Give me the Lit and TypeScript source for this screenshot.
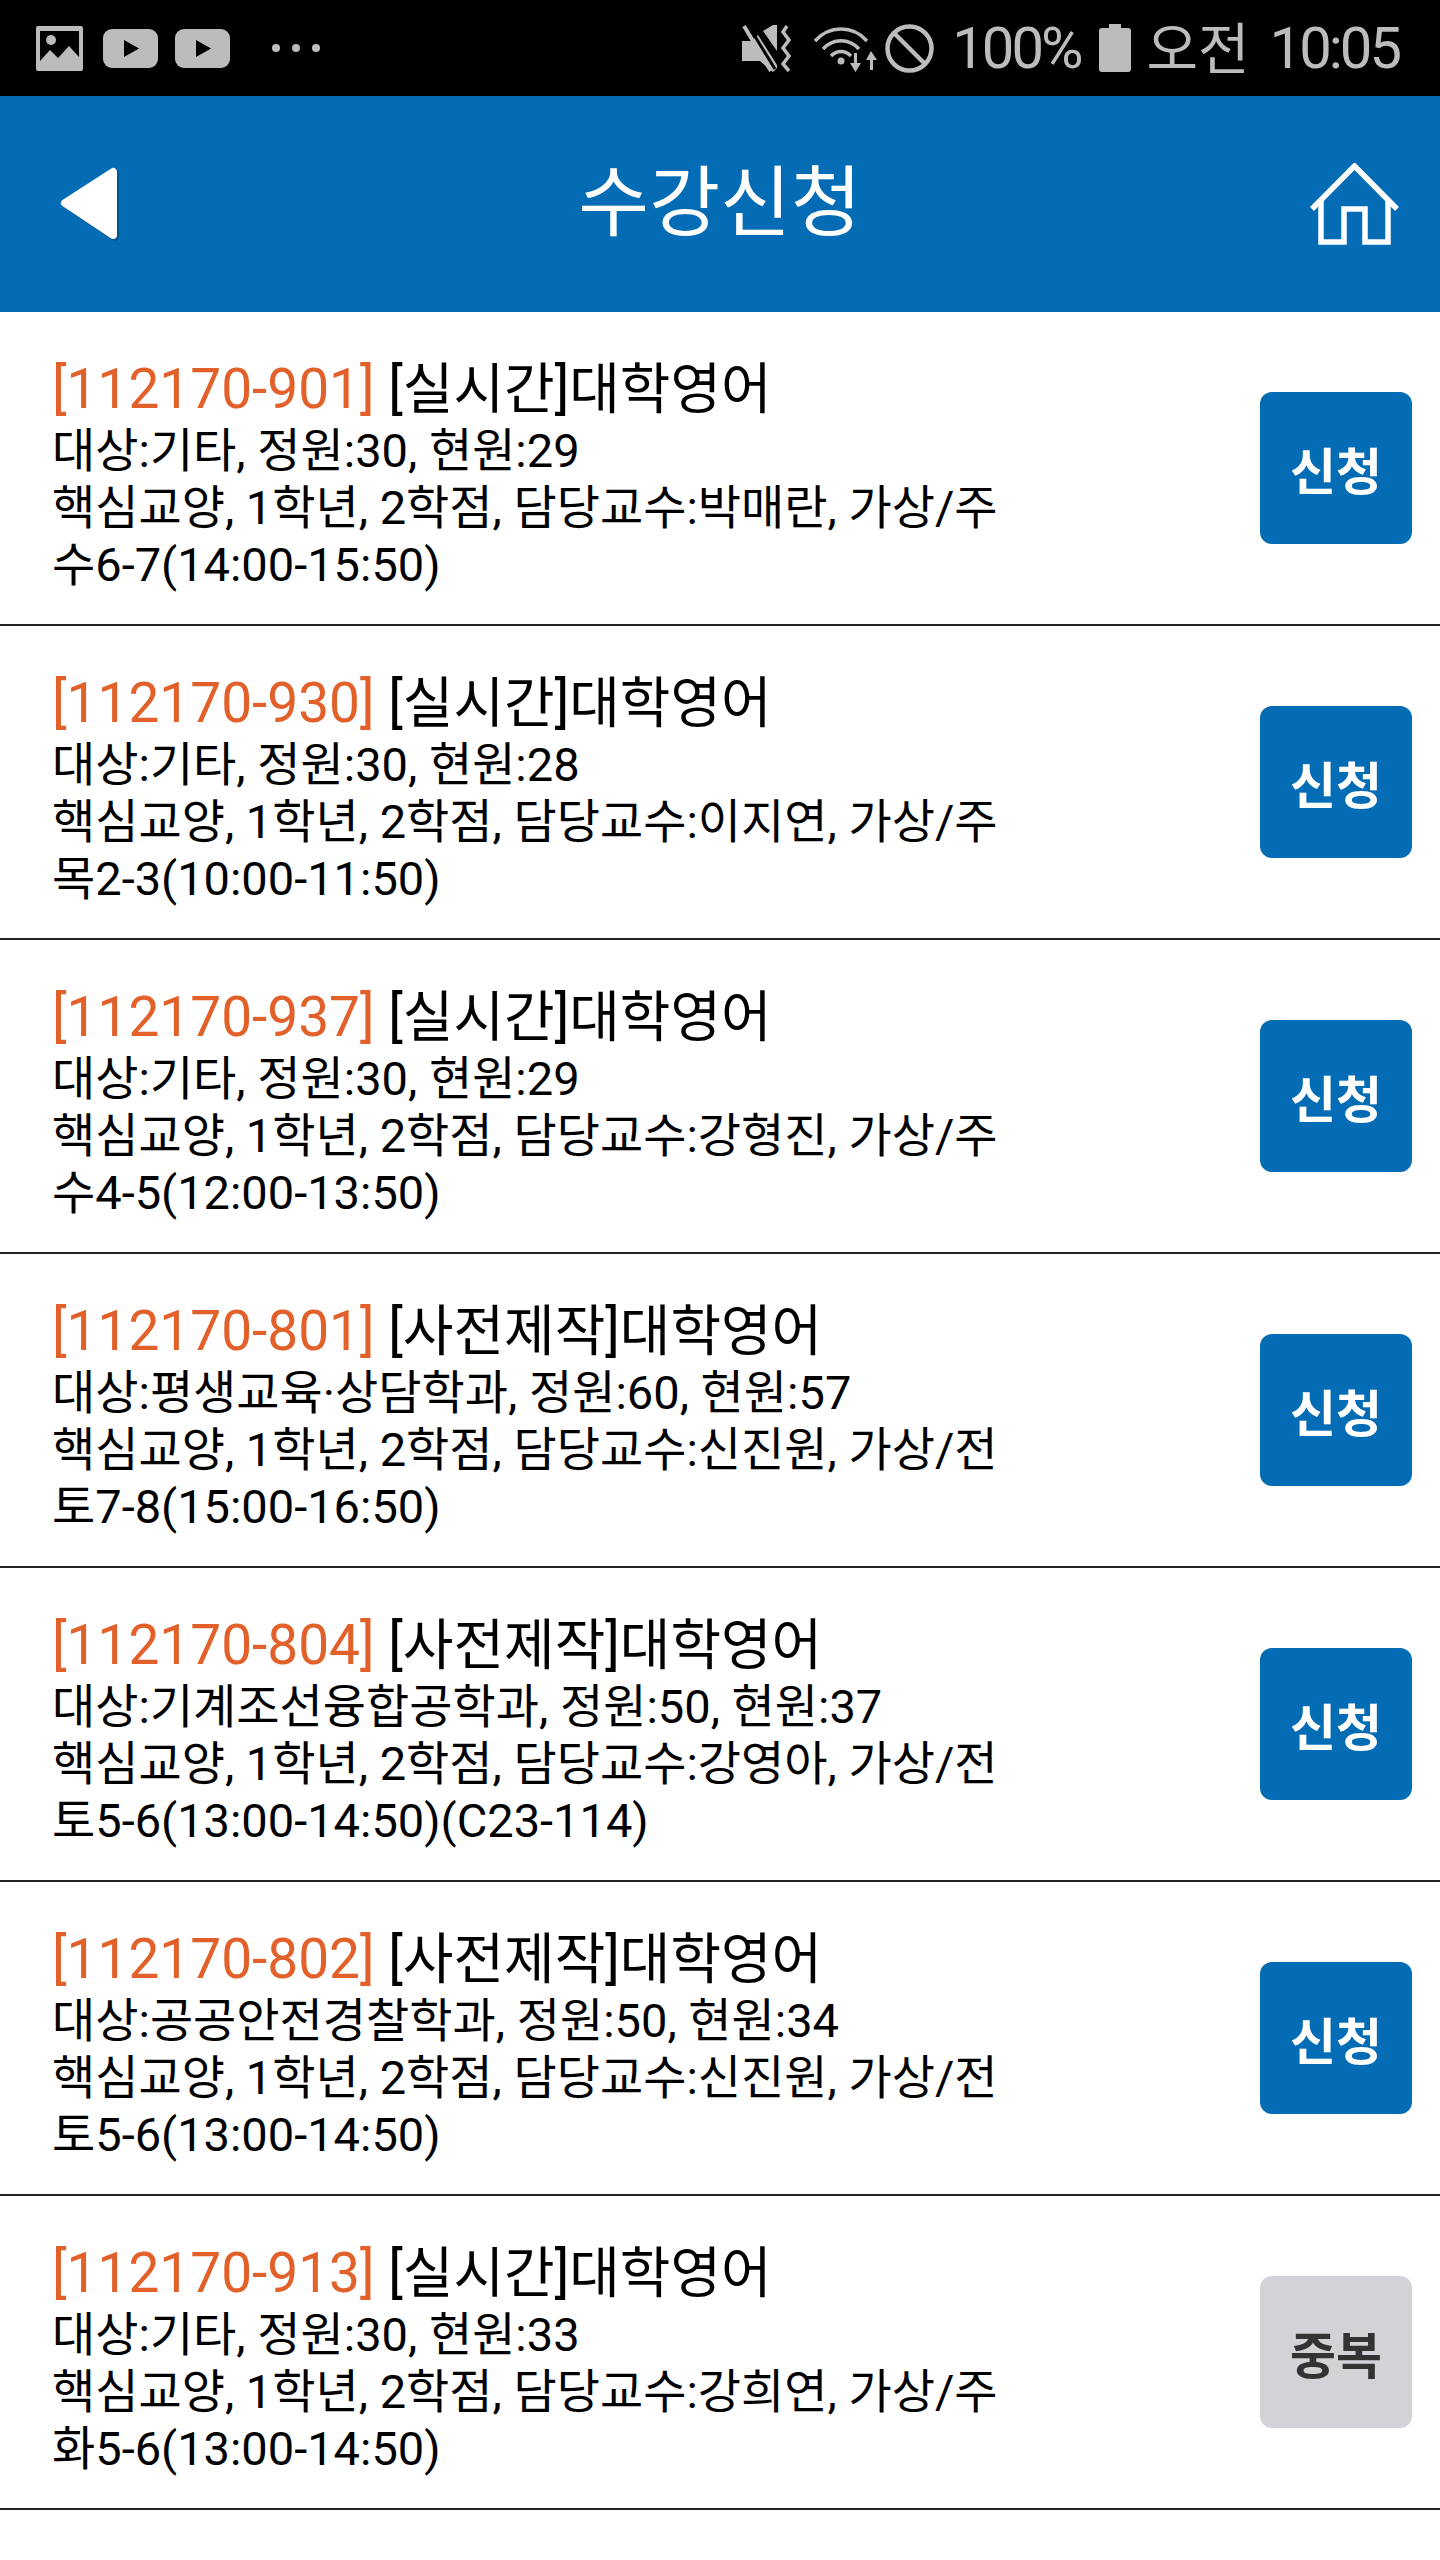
import { LitElement, html, css, svg } from "lit";
import { customElement } from "lit/decorators.js";

const COURSES = [
  { code: "112170-901", kind: "실시간", target: "기타", cap: 30, cur: 29, prof: "박매란", slot: "가상/주수6-7(14:00-15:50)", dup: false },
  { code: "112170-930", kind: "실시간", target: "기타", cap: 30, cur: 28, prof: "이지연", slot: "가상/주목2-3(10:00-11:50)", dup: false },
  { code: "112170-937", kind: "실시간", target: "기타", cap: 30, cur: 29, prof: "강형진", slot: "가상/주수4-5(12:00-13:50)", dup: false },
  { code: "112170-801", kind: "사전제작", target: "평생교육·상담학과", cap: 60, cur: 57, prof: "신진원", slot: "가상/전토7-8(15:00-16:50)", dup: false },
  { code: "112170-804", kind: "사전제작", target: "기계조선융합공학과", cap: 50, cur: 37, prof: "강영아", slot: "가상/전토5-6(13:00-14:50)(C23-114)", dup: false },
  { code: "112170-802", kind: "사전제작", target: "공공안전경찰학과", cap: 50, cur: 34, prof: "신진원", slot: "가상/전토5-6(13:00-14:50)", dup: false },
  { code: "112170-913", kind: "실시간", target: "기타", cap: 30, cur: 33, prof: "강희연", slot: "가상/주화5-6(13:00-14:50)", dup: true },
];

const playIcon = svg`<svg class="play" viewBox="0 0 55 39"><rect width="55" height="39" rx="9" fill="#bdbbbd"/><path d="M21 11 L36 19.5 L21 28 Z" fill="#000"/></svg>`;

@customElement("app-root")
export class AppRoot extends LitElement {
  static styles = css`
    :host {
      display: block;
      width: 1440px;
      height: 2560px;
      overflow: hidden;
      background: #fff;
      font-family: Roboto, "Noto Sans CJK KR", sans-serif;
    }

    /* status bar */
    .status {
      height: 96px;
      background: #000;
      color: #bdbbbd;
      display: flex;
      align-items: center;
      padding: 0 41px 0 36px;
      box-sizing: border-box;
    }
    .status svg { display: block; flex: none; }
    .status .pic { width: 47px; height: 45px; margin-right: 20px; }
    .status .play { width: 55px; height: 39px; margin-right: 17px; }
    .status .dots { width: 50px; height: 10px; margin-left: 24px; }
    .status .right {
      margin-left: auto;
      display: flex;
      align-items: center;
    }
    .status .mute { width: 51px; height: 47px; margin-right: 20px; }
    .status .wifi { width: 65px; height: 47px; margin-right: 7px; }
    .status .block { width: 49px; height: 49px; margin-right: 18px; }
    .status .batt { width: 32px; height: 48px; margin: 0 16px 0 18px; }
    .status .txt {
      font-size: 58px;
      line-height: 60px;
      letter-spacing: -3px;
    }
    .status .ampm {
      font-size: 56px;
      line-height: 60px;
      margin: 4px 20px 0 0;
    }

    /* header */
    .head {
      height: 216px;
      background: #046bb5;
      display: grid;
      grid-template-columns: 1fr auto 1fr;
      align-items: center;
      color: #fff;
    }
    .head h1 {
      margin: 0;
      font-size: 77px;
      font-weight: 400;
      line-height: 90px;
    }
    .head .back { width: 58px; height: 74px; margin-left: 60px; display: block; overflow: visible; }
    .head .home { width: 89px; height: 82px; margin-right: 41px; justify-self: end; display: block; }

    /* list */
    .row {
      height: 314px;
      box-sizing: border-box;
      border-bottom: 2px solid #222;
      padding: 0 28px 0 52px;
      display: flex;
      align-items: center;
      justify-content: space-between;
    }
    .info {
      width: 960px;
      align-self: flex-start;
      padding-top: 45px;
      word-break: break-all;
      color: #000;
      font-size: 47px;
      line-height: 57px;
    }
    .title {
      font-size: 55px;
      line-height: 65px;
    }
    .code { color: #e2602a; }
    .apply {
      width: 152px;
      height: 152px;
      flex: none;
      border: none;
      border-radius: 12px;
      background: #046bb5;
      color: #fff;
      font: 700 50px Roboto, "Noto Sans CJK KR", sans-serif;
      padding: 0;
    }
    .apply.dup {
      background: #d3d2d6;
      color: #333;
    }
  `;

  renderStatus() {
    return html`
      <div class="status">
        <svg class="pic" viewBox="0 0 47 45">
          <path fill-rule="evenodd" fill="#bdbbbd" d="M2 0H45a2 2 0 0 1 2 2V43a2 2 0 0 1-2 2H2a2 2 0 0 1-2-2V2a2 2 0 0 1 2-2ZM4 5V35L14 24L22 32L33 20L43 31V5Z"/>
          <circle cx="15" cy="14" r="5" fill="#bdbbbd"/>
        </svg>
        ${playIcon}${playIcon}
        <svg class="dots" viewBox="0 0 50 10">
          <circle cx="5" cy="5" r="4" fill="#bdbbbd"/><circle cx="25" cy="5" r="4" fill="#bdbbbd"/><circle cx="45" cy="5" r="4" fill="#bdbbbd"/>
        </svg>
        <div class="right">
          <svg class="mute" viewBox="0 0 51 47">
            <path fill="#bdbbbd" d="M0 16H9L16 10L35 40V43L31 47L18 36H0ZM21 6L31 0H35V26Z"/>
            <path stroke="#bdbbbd" stroke-width="4" fill="none" d="M2 1L29 46"/>
            <path stroke="#000" stroke-width="3" fill="none" d="M6 0L33 44"/>
            <path stroke="#bdbbbd" stroke-width="3.5" fill="none" d="M45 1L41 7L47 15L41 23L47 31L41 39L47 46"/>
          </svg>
          <svg class="wifi" viewBox="0 0 65 47">
            <g fill="none" stroke="#bdbbbd" stroke-width="3.5">
              <path d="M2 16C16 0 40 0 54 16"/>
              <path d="M10 24C20 13 36 13 46 24"/>
              <path d="M18 31C24 25 32 25 38 31"/>
            </g>
            <circle cx="28" cy="36" r="3.5" fill="#bdbbbd"/>
            <path fill="#bdbbbd" d="M41 28H44V38H48L42.5 47L37 38H41ZM58 26L64 35H60V45H57V35H53Z"/>
          </svg>
          <svg class="block" viewBox="0 0 49 49">
            <circle cx="24.5" cy="24.5" r="22" fill="none" stroke="#bdbbbd" stroke-width="4.5"/>
            <path d="M9 9L40 40" stroke="#bdbbbd" stroke-width="4.5"/>
          </svg>
          <span class="txt">100%</span>
          <svg class="batt" viewBox="0 0 32 48">
            <path fill="#bdbbbd" d="M10 0H22V4H29a3 3 0 0 1 3 3V45a3 3 0 0 1-3 3H3a3 3 0 0 1-3-3V7a3 3 0 0 1 3-3H10Z"/>
          </svg>
          <span class="ampm">오전</span>
          <span class="txt">10:05</span>
        </div>
      </div>
    `;
  }

  renderHead() {
    return html`
      <div class="head">
        <svg class="back" viewBox="0 0 58 74">
          <path d="M55 6V70L7 38Z" fill="#063f6b" opacity=".5" stroke="#063f6b" stroke-width="8" stroke-linejoin="round"/>
          <path d="M53 5V68L5 36Z" fill="#fff" stroke="#fff" stroke-width="8" stroke-linejoin="round"/>
        </svg>
        <h1>수강신청</h1>
        <svg class="home" viewBox="0 0 89 82">
          <g fill="none" stroke="#fff" stroke-width="5.5" stroke-linejoin="miter">
            <path d="M2 46L44.5 3L87 46"/>
            <path d="M11 37V79H34V46H55V79H78V37"/>
          </g>
        </svg>
      </div>
    `;
  }

  render() {
    return html`
      ${this.renderStatus()}
      ${this.renderHead()}
      <div class="list">
        ${COURSES.map(
          (c) => html`
            <div class="row">
              <div class="info">
                <div class="title"><span class="code">[${c.code}]</span> [${c.kind}]대학영어</div>
                <div>대상:${c.target}, 정원:${c.cap}, 현원:${c.cur}</div>
                <div>핵심교양, 1학년, 2학점, 담당교수:${c.prof}, ${c.slot}</div>
              </div>
              <button class="apply ${c.dup ? "dup" : ""}">${c.dup ? "중복" : "신청"}</button>
            </div>
          `
        )}
        <div class="row">
          <div class="info">
            <div class="title"><span class="code">[112170-902]</span> [실시간]대학영어</div>
          </div>
        </div>
      </div>
    `;
  }
}
